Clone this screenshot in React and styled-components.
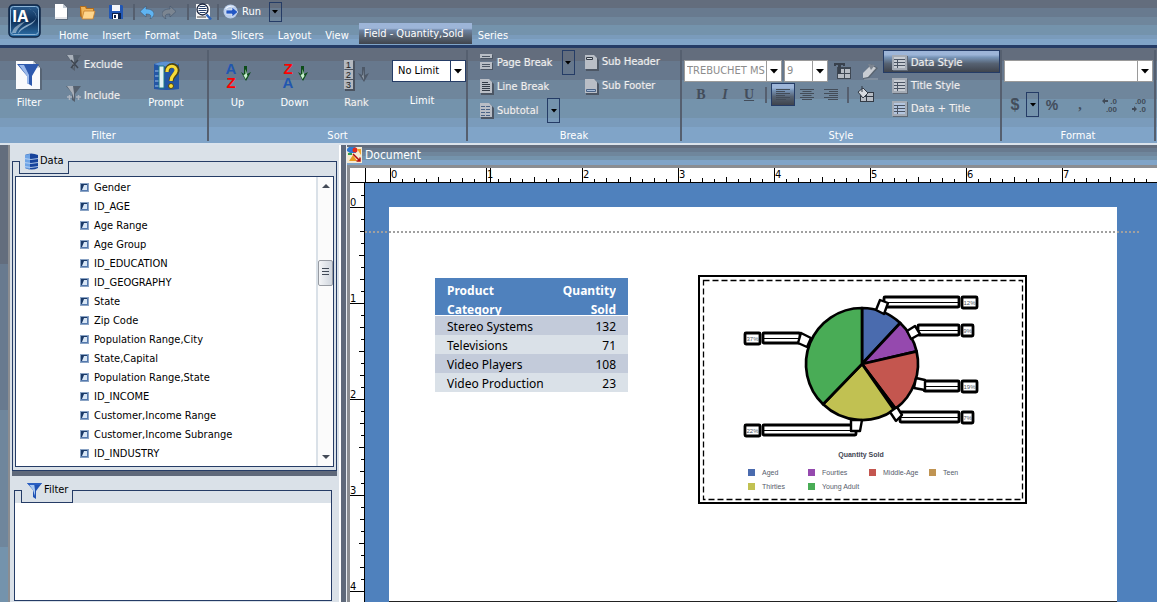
import React, { useEffect, useState } from 'react';
import styled, { createGlobalStyle, css } from 'styled-components';

const NAVY = '#253c66';
const PANEL = '#dae1e8';
const BLUE = '#4f81bd';

const fields = [
  'Gender',
  'ID_AGE',
  'Age Range',
  'Age Group',
  'ID_EDUCATION',
  'ID_GEOGRAPHY',
  'State',
  'Zip Code',
  'Population Range,City',
  'State,Capital',
  'Population Range,State',
  'ID_INCOME',
  'Customer,Income Range',
  'Customer,Income Subrange',
  'ID_INDUSTRY',
];

const rows = [
  ['Stereo Systems', 132],
  ['Televisions', 71],
  ['Video Players', 108],
  ['Video Production', 23],
];

const menu = ['Home', 'Insert', 'Format', 'Data', 'Slicers', 'Layout', 'View'];

/* ---------- icons ---------- */

const Caret = () => (
  <svg width="8" height="5" viewBox="0 0 8 5"><path d="M0 0h8L4 4.5z" fill="#000" /></svg>
);

const SmallCaret = () => (
  <svg width="6" height="4" viewBox="0 0 6 4"><path d="M0 0h6L3 3.5z" fill="#000" /></svg>
);

const LogoIcon = () => (
  <svg width="33" height="34" viewBox="0 0 33 34">
    <defs>
      <linearGradient id="logo" x1="0" y1="0" x2="0" y2="1">
        <stop offset="0" stopColor="#2c5f92" />
        <stop offset="0.5" stopColor="#0d2f58" />
        <stop offset="1" stopColor="#2f74ad" />
      </linearGradient>
    </defs>
    <rect x="1" y="1" width="31" height="32" rx="4" fill="url(#logo)" stroke="#0c2546" strokeWidth="1.5" />
    <rect x="2.5" y="2.5" width="28" height="28" rx="3" fill="none" stroke="#8db4d6" strokeWidth="1" />
    <path d="M20 4c10 4 11 11 3 15-7 3-12 6-13 11 4-6 10-7 15-11 6-5 3-12-5-15z" fill="#a9c6de" opacity=".8" />
    <path d="M4 29c1-6 7-9 14-12-6 5-9 8-10 12z" fill="#dce9f3" opacity=".5" />
    <text x="4" y="18" fontFamily="'Open Sans', sans-serif" fontWeight="700" fontSize="16" fill="#fff">IA</text>
  </svg>
);

const NewIcon = () => (
  <svg width="16" height="17" viewBox="0 0 16 17">
    <path d="M3 2h8l4 4v11H3z" fill="#4d5868" opacity=".6" />
    <path d="M2 1h8l4 4v11H2z" fill="#fff" />
    <path d="M10 1v4h4z" fill="#c2cad4" />
    <path d="M2 14h12v2H2z" fill="#e4e6ea" />
  </svg>
);

const OpenIcon = () => (
  <svg width="17" height="16" viewBox="0 0 17 16">
    <path d="M1 2h6l1 2h7v10H3L1 12z" fill="#b06d1f" />
    <path d="M2 3h4l1 2h7v3H6l-3 6z" fill="#f2b557" />
    <path d="M5 7h11l-2 8H3z" fill="#ffd58c" stroke="#c57f2d" strokeWidth=".8" />
  </svg>
);

const SaveIcon = () => (
  <svg width="16" height="16" viewBox="0 0 16 16">
    <path d="M1 1h13l1 1v13H2l-1-1z" fill="#2257b4" />
    <path d="M4 1h8v6H4z" fill="#f4f6fa" />
    <path d="M4 9h9v6H4z" fill="#0d2148" />
    <path d="M5 10h5v5H5z" fill="#fff" />
    <path d="M6 11h2v3H6z" fill="#0d2148" />
  </svg>
);

const UndoIcon = ({ fill, flip }) => (
  <svg width="14" height="14" viewBox="0 0 14 14">
    <g transform={flip ? 'matrix(-1 0 0 1 14 0)' : undefined}>
      <path d="M6 1v3c5 0 8 2 8 5 0 2-2 4-4 5 2-4 0-5-4-5v3L0 6.500z" fill={fill} stroke="#3d4e66" strokeWidth=".5" />
    </g>
  </svg>
);

const PreviewIcon = () => (
  <svg width="17" height="17" viewBox="0 0 17 17">
    <path d="M1 1h12l2 3v12H1z" fill="#f6f6f6" />
    <path d="M2 14h9" stroke="#444" />
    <circle cx="7.500" cy="6.500" r="5.500" fill="#fff" stroke="#15203a" strokeWidth="1.3" />
    <path d="M4.500 3.500h6M3.500 5.500h8M3.500 7.500h8M4.500 9.500h6" stroke="#27406b" strokeWidth="1" />
    <path d="M11.500 11.500l4.500 5" stroke="#2d62b8" strokeWidth="2.500" />
  </svg>
);

const RunIcon = () => (
  <svg width="16" height="16" viewBox="0 0 16 16">
    <circle cx="7.500" cy="7.500" r="7" fill="#b9cdea" />
    <path d="M2 5a7 7 0 0 1 10-2 9 9 0 0 0-9 2z" fill="#f2f7ff" />
    <path d="M3 6h6V3l6 5-6 5v-3H3z" fill="#2458c4" stroke="#e7eefb" strokeWidth=".7" />
  </svg>
);

const FilterPageIcon = () => (
  <svg width="28" height="31" viewBox="0 0 28 31">
    <path d="M2 2h18l7 7v21H3z" fill="#4c5664" opacity=".6" />
    <path d="M1 1h17l7 7v21H1z" fill="#f9fafc" />
    <path d="M18 1v7h7z" fill="#ccd3dc" />
    <path d="M2 4h22l-7 12v10l-5-3v-7z" fill="#2d59ae" />
    <path d="M4 5l8 11v7l2 1V15L9 5z" fill="#9bb9ea" />
  </svg>
);

const Funnel = ({ blue, mark }) => (
  <svg width="17" height="17" viewBox="0 0 17 17">
    <path d="M1 1h15l-6 8v8l-3-2V8z" fill={blue ? '#1f52b4' : '#55606e'} />
    <path d="M2 1h6l1 7v6L7 8z" fill={blue ? '#a8c8f2' : '#a9b0ba'} />
    {blue && <path d="M1 1h15l-2 2H3z" fill="#2a5fc2" />}
    {mark === 'x' && <path d="M6 6l7 8M13 6l-7 8" stroke="#3e4651" strokeWidth="1.5" />}
    {mark === '+' && <path d="M2 12h5M4.500 10v5M11 12h5M13.500 10v5" stroke="#adb4be" strokeWidth="1.5" />}
  </svg>
);

const PromptIcon = () => (
  <svg width="27" height="31" viewBox="0 0 27 31">
    <path d="M1 4q12-5 25 0v25q-12 2-25 0z" fill="#2456a5" />
    <path d="M1 4q12-5 25 0-12 5-25 0z" fill="#5d92d4" />
    <path d="M2 11h8M2 16h8M2 21h8M2 26h8" stroke="#9dc2e8" />
    <path d="M6 6h5v22H6z" fill="#e2f2f4" stroke="#1f7b84" />
    <path d="M14 12c0-9 11-8 10-1-1 4-5 4-6 10" fill="none" stroke="#4f4513" strokeWidth="5" />
    <path d="M14 12c0-8 10-7 9-1-1 4-5 4-5 10" fill="none" stroke="#f7dc3a" strokeWidth="3.2" />
    <circle cx="18" cy="26" r="2.500" fill="#f7dc3a" stroke="#4f4513" />
  </svg>
);

const SortIcon = ({ first, second }) => (
  <svg width="28" height="31" viewBox="0 0 28 31">
    <g fontFamily="'Liberation Sans', sans-serif" fontWeight="700" fontSize="15" textAnchor="middle">
      <text x="7" y="14" fill={first === 'A' ? '#2156b0' : '#f00'}>{first}</text>
      <text x="7" y="28" fill={second === 'A' ? '#2156b0' : '#f00'}>{second}</text>
    </g>
    <path d="M20 6h3v8l4-2-5 9-5-9 3 2z" fill="#0d4d1a" />
    <path d="M21.500 9v5l-2 1 2 4 2-3z" fill="#c9efce" />
  </svg>
);

const RankIcon = () => (
  <svg width="28" height="31" viewBox="0 0 28 31">
    {[1, 2, 3].map((n, i) => (
      <g key={n}>
        <rect x="2" y={1 + i * 10} width="10" height="10" fill="#4a5360" />
        <rect x="1" y={i * 10} width="9" height="9" fill="#b4b9c0" />
        <text x="5.500" y={8 + i * 10} fontSize="9" fontFamily="'Liberation Sans', sans-serif" textAnchor="middle" fill="#222">{n}</text>
      </g>
    ))}
    <path d="M19 7h3v8l4-2-5 9-6-9 4 2z" fill="#4d5867" />
    <path d="M20 9v6l-1 1 2 4z" fill="#9ea8b4" />
  </svg>
);

const PageIcon = ({ kind }) => (
  <svg width="15" height="17" viewBox="0 0 15 17">
    {kind === 'break' ? (
      <>
        <path d="M2 1h12v4H2zM2 9h12v7H2z" fill="#4c5664" />
        <path d="M1 0h12v4H1zM1 8h12v7H1z" fill="#b9bec6" />
        <path d="M3 2.500h8M3 10.500h8M3 12.500h8" stroke="#4c5664" />
      </>
    ) : (
      <>
        <path d="M2 2h9l4 4v11H2z" fill="#4c5664" />
        <path d="M1 1h9l3 3v11H1z" fill="#b9bec6" />
      </>
    )}
    {kind === 'line' && <path d="M3 4.500h6M3 6.500h8M3 8.500h8M3 10.500h8M3 12.500h8" stroke="#333b46" />}
    {kind === 'subtotal' && <path d="M2 4.500h4M7 4.500h4M2 7.500h4M7 7.500h4M2 10.500h4M7 10.500h4M2 13.500h4M7 13.500h4" stroke="#4b6487" />}
    {kind === 'header' && <path d="M2.500 3.500h6v2h-6z" fill="#d6dae0" stroke="#333b46" />}
    {kind === 'footer' && <path d="M2.500 11.500h9v2h-9z" fill="#a7bcd8" stroke="#4b6487" />}
  </svg>
);

const GridIcon = ({ tint }) => (
  <svg width="16" height="16" viewBox="0 0 16 16">
    <path d="M1 1h15v15H1z" fill="#5f6875" />
    <path d="M0 0h15v15H0z" fill="#a4abb5" />
    <path d="M2 2h11v11H2z" fill={tint || '#c8cdd4'} />
    <path d="M2 4.500h11M2 7.500h11M2 10.500h11M5.500 4v9" stroke="#4b5564" />
  </svg>
);

const TextGridIcon = () => (
  <svg width="17" height="17" viewBox="0 0 17 17">
    <path d="M3 4h14v12H3z" fill="#3f4854" />
    <path d="M4 6h6v4H4zM11 6h5v4h-5zM4 11h6v4H4zM11 11h5v4h-5z" fill="#b7bcc4" />
    <path d="M0 0h11v3H9V2H7v8h1v1H3v-1h1V2H2v1H0z" fill="#39414d" />
  </svg>
);

const EraserIcon = () => (
  <svg width="18" height="17" viewBox="0 0 18 17">
    <path d="M3 16h14" stroke="#9aa5b2" />
    <path d="M2 11l8-10 7 4-9 10-6 1z" fill="#596470" />
    <path d="M2 10l8-8 5 3-8 9-5 1z" fill="#c9cdd3" />
    <path d="M7 1l3 6 4-5z" fill="#7b8490" />
  </svg>
);

const FillIcon = () => (
  <svg width="17" height="17" viewBox="0 0 17 17">
    <path d="M3 6h14v10H3z" fill="#333b46" />
    <path d="M4 11h5v4H4zM10 7h6v3h-6zM10 11h6v4h-6z" fill="#b7bcc4" />
    <path d="M1 6l5-4 5 5-5 5z" fill="#d8dbe0" stroke="#333b46" />
    <path d="M5 0v6" stroke="#333b46" />
  </svg>
);

const AlignIcon = ({ side }) => {
  const widths = [14, 9, 14, 9, 14, 10];
  return (
    <svg width="14" height="14" viewBox="0 0 14 14">
      {widths.map((w, i) => {
        const x = side === 'left' ? 0 : side === 'right' ? 14 - w : (14 - w) / 2;
        return <rect key={i} x={x} y={1 + i * 2} width={w} height="1" fill="#434c58" />;
      })}
    </svg>
  );
};

const DecimalIcon = ({ top, bottom, left }) => (
  <svg width="16" height="16" viewBox="0 0 16 16" fill="#414b58">
    <g fontFamily="'Liberation Sans', sans-serif" fontWeight="700" fontSize="8" textAnchor="end">
      <text x="15" y="7">{top}</text>
      <text x="15" y="15">{bottom}</text>
    </g>
    {left
      ? <path d="M0 4l3-3v2h3v2H3v2z" />
      : <path d="M6 12l-3-3v2H1v2h2v2z" />}
  </svg>
);

const DatabaseIcon = () => (
  <svg width="15" height="17" viewBox="0 0 15 17">
    <path d="M1 2q6-3 13 0v13q-6 3-13 0z" fill="#17439b" />
    <path d="M1 2q3-1 5-1v15q-3 0-5-1z" fill="#6ea4e6" />
    <path d="M0 5.500q7 2 14 0M0 9.500q7 2 14 0M0 13.500q7 2 14 0" stroke="#c9dcf5" fill="none" strokeWidth=".8" />
  </svg>
);

const FieldIcon = () => (
  <svg width="9" height="9" viewBox="0 0 9 9">
    <path d="M0 0h9v9H0z" fill="#8aa3c4" />
    <path d="M1 1h7v7H1z" fill="#1b3a68" />
    <path d="M4 2h3v5H2z" fill="#d8e6f5" />
    <path d="M7 1h1v7H1V7h6z" fill="#5479ae" />
  </svg>
);

const DocIcon = () => (
  <svg width="15" height="16" viewBox="0 0 15 16">
    <path d="M0 0h15v16H0z" fill="#f5ead2" />
    <path d="M0 4a5 4 0 0 1 9-3v5H3z" fill="#2e78d2" />
    <circle cx="8" cy="3" r="2.500" fill="#e22a1d" />
    <path d="M1 6h4v2H1z" fill="#2e9c4a" />
    <path d="M10 2h4v6z" fill="#f0a22c" />
    <path d="M2 14l4-6 4 6z" fill="#e89a20" />
    <path d="M6 7l7 7M13 10.500V14h-3.500" stroke="#b10d0d" strokeWidth="1.500" fill="none" />
  </svg>
);

/* ---------- rulers ---------- */

const STEP = 12; // an eighth of an inch

function useWindowSize() {
  const read = () => ({ width: window.innerWidth, height: window.innerHeight });
  const [size, setSize] = useState(read);
  useEffect(() => {
    const onResize = () => setSize(read());
    window.addEventListener('resize', onResize);
    return () => window.removeEventListener('resize', onResize);
  }, []);
  return size;
}

function Ticks({ vertical, origin, depth, to }) {
  const ticks = [];
  for (let i = -1; i <= to; i += 1) {
    const pos = origin + i * STEP;
    const mod = ((i % 8) + 8) % 8;
    let len = 3;
    if (mod === 0) len = depth;
    else if (mod === 4) len = 5;
    else if (mod % 2 === 0) len = 4;
    ticks.push(
      <g key={i}>
        {vertical
          ? <rect x={depth - len} y={pos} width={len} height="1" />
          : <rect x={pos} y={depth - len} width="1" height={len} />}
        {mod === 0 && (
          vertical
            ? <text x="0" y={pos - 1}>{i / 8}</text>
            : <text x={pos + 1} y="10">{i / 8}</text>
        )}
      </g>,
    );
  }
  return <g fill="#000" fontFamily="'DejaVu Sans Condensed', sans-serif" fontSize="11">{ticks}</g>;
}

/* ---------- pie chart ---------- */

const CX = 164;
const CY = 89;
const R = 56;

const slices = [
  { from: 0, to: 43, fill: '#4a6bae' },
  { from: 43, to: 77, fill: '#9549ae' },
  { from: 77, to: 143, fill: '#c4564f' },
  { from: 143, to: 145, fill: '#c09452' },
  { from: 145, to: 224, fill: '#c1c152' },
  { from: 224, to: 360, fill: '#49ac56' },
];

const callouts = [
  { x: 186, y: 22, w: 75, box: 264, bw: 15, text: '12%', stub: 'M178 35l4-10 8 3-4 11z' },
  { x: 220, y: 50, w: 41, box: 264, bw: 11, text: '9%', stub: 'M209 56l8-5 5 8-9 5z' },
  { x: 226, y: 106, w: 35, box: 264, bw: 15, text: '19%', stub: 'M218 103l9 2v10l-11-2z' },
  { x: 202, y: 137, w: 59, box: 264, bw: 11, text: '7%', stub: 'M192 137l7-5 5 8-6 6z' },
  { x: 65, y: 150, w: 93, box: 47, bw: 15, text: '22%', stub: 'M153 145h11l-2 11h-9z' },
  { x: 65, y: 58, w: 37, box: 47, bw: 15, text: '37%', stub: 'M103 58l10 5-4 9-9-4z' },
];

const legend = [
  { x: 50, y: 194, fill: '#4a6bae', name: 'Aged' },
  { x: 110, y: 194, fill: '#9549ae', name: 'Fourties' },
  { x: 171, y: 194, fill: '#c4564f', name: 'Middle-Age' },
  { x: 231, y: 194, fill: '#c09452', name: 'Teen' },
  { x: 50, y: 208, fill: '#c1c152', name: 'Thirties' },
  { x: 110, y: 208, fill: '#49ac56', name: 'Young Adult' },
];

const point = (deg) => {
  const a = (deg * Math.PI) / 180;
  return `${(CX + R * Math.sin(a)).toFixed(1)} ${(CY - R * Math.cos(a)).toFixed(1)}`;
};

function PieChart() {
  return (
    <svg width="329" height="229" viewBox="0 0 329 229" role="img" aria-label="Quantity Sold">
      <rect x="1" y="1" width="327" height="227" fill="#fff" stroke="#000" strokeWidth="2" />
      <rect x="5.500" y="5.500" width="319" height="219" fill="none" stroke="#000" strokeWidth="1.300" strokeDasharray="6 3" />
      {slices.map((s) => (
        <path
          key={s.from}
          d={`M${CX} ${CY}L${point(s.from)}A${R} ${R} 0 0 1 ${point(s.to)}z`}
          fill={s.fill}
          stroke="#000"
          strokeWidth="2.7"
          strokeLinejoin="round"
        />
      ))}
      {callouts.map((c) => (
        <g key={c.text} fill="#fff" stroke="#000" strokeWidth="2.8" strokeLinejoin="round">
          <rect x={c.x} y={c.y} width={c.w} height="10" rx="1" />
          <path d={`M${c.x} ${c.y + 5.5}h${c.w}`} strokeWidth="1" />
          <path d={c.stub} strokeWidth="2.4" />
          <rect x={c.box} y={c.y} width={c.bw} height="11" rx="1" />
          <text x={c.box + c.bw / 2} y={c.y + 8} fontSize="6" fill="#4b5563" stroke="none" textAnchor="middle" fontFamily="'Liberation Sans', sans-serif">
            {c.text}
          </text>
        </g>
      ))}
      <g fontFamily="'Liberation Sans', sans-serif" fontSize="7" fill="#565c6c">
        <text x="163" y="182" textAnchor="middle" fontWeight="700" fill="#3f4654">Quantity Sold</text>
        {legend.map((l) => (
          <g key={l.name}>
            <rect x={l.x} y={l.y} width="7" height="7" fill={l.fill} />
            <text x={l.x + 14} y={l.y + 6}>{l.name}</text>
          </g>
        ))}
      </g>
    </svg>
  );
}

function Combo({ label, value, width, light }) {
  return (
    <ComboBox $width={width} $light={light}>
      <select aria-label={label} defaultValue={value}>
        <option>{value}</option>
      </select>
      <ComboArrow $light={light}><Caret /></ComboArrow>
    </ComboBox>
  );
}

export default function App() {
  const { width, height } = useWindowSize();

  return (
    <Shell>
      <GlobalStyle />
      <Header>
        <LogoButton aria-label="Application menu"><LogoIcon /></LogoButton>
        <HeaderRows>
          <QuickBar>
            <IconButton $w={20} aria-label="New"><NewIcon /></IconButton>
            <IconButton $w={32} aria-label="Open"><OpenIcon /></IconButton>
            <IconButton $w={26} aria-label="Save"><SaveIcon /></IconButton>
            <ThinLine />
            <IconButton $w={16} aria-label="Undo"><UndoIcon fill="#5fb4f2" /></IconButton>
            <IconButton $w={28} aria-label="Redo"><UndoIcon fill="#7b8591" flip /></IconButton>
            <ThinLine />
            <IconButton $w={20} aria-label="Preview"><PreviewIcon /></IconButton>
            <ThinLine />
            <RunButton><RunIcon />Run</RunButton>
            <DropButton $h={20} aria-label="Run options"><SmallCaret /></DropButton>
          </QuickBar>
          <MenuBar>
            {menu.map((m) => <MenuItem key={m} href="#">{m}</MenuItem>)}
            <MenuItem href="#" $active>Field - Quantity,Sold</MenuItem>
            <MenuItem href="#">Series</MenuItem>
          </MenuBar>
        </HeaderRows>
      </Header>

      <Ribbon>
        <Group $w={207}>
          <GroupBody $left={15}>
            <BigButton $w={28}><FilterPageIcon />Filter</BigButton>
            <FilterStack>
              <FadedButton><Funnel mark="x" /><span>Exclude</span></FadedButton>
              <FadedButton><Funnel mark="+" /><span>Include</span></FadedButton>
            </FilterStack>
            <BigButton $w={36}><PromptIcon />Prompt</BigButton>
          </GroupBody>
          <GroupLabel>Filter</GroupLabel>
        </Group>
        <Divider />
        <Group $w={257}>
          <GroupBody>
            <BigButton $w={57}><SortIcon first="A" second="Z" />Up</BigButton>
            <BigButton $w={57}><SortIcon first="Z" second="A" />Down</BigButton>
            <BigButton $w={67} $faded><RankIcon />Rank</BigButton>
            <LimitBox>
              <Combo label="Limit" value="No Limit" width={74} />
              <span>Limit</span>
            </LimitBox>
          </GroupBody>
          <GroupLabel>Sort</GroupLabel>
        </Group>
        <Divider />
        <Group $w={212}>
          <GroupBody $left={11}>
            <BreakColumn>
              <BreakRow $h={25}>
                <SmallButton><PageIcon kind="break" />Page Break</SmallButton>
                <DropButton $h={25} aria-label="Page break options"><SmallCaret /></DropButton>
              </BreakRow>
              <BreakRow $h={23}>
                <SmallButton><PageIcon kind="line" />Line Break</SmallButton>
              </BreakRow>
              <BreakRow $h={25}>
                <SmallButton><PageIcon kind="subtotal" />Subtotal</SmallButton>
                <DropButton $h={25} aria-label="Subtotal options"><SmallCaret /></DropButton>
              </BreakRow>
            </BreakColumn>
            <BreakColumn>
              <BreakRow $h={24}>
                <SmallButton><PageIcon kind="header" />Sub Header</SmallButton>
              </BreakRow>
              <BreakRow $h={24}>
                <SmallButton><PageIcon kind="footer" />Sub Footer</SmallButton>
              </BreakRow>
            </BreakColumn>
          </GroupBody>
          <GroupLabel>Break</GroupLabel>
        </Group>
        <Divider />
        <Group $w={318}>
          <GroupBody $left={2}>
            <FontBlock>
              <FontRow>
                <Combo label="Font" value="TREBUCHET MS" width={99} light />
                <Combo label="Size" value="9" width={44} light />
                <IconButton $w={26} aria-label="Text grid"><TextGridIcon /></IconButton>
                <IconButton $w={26} aria-label="Clear style"><EraserIcon /></IconButton>
              </FontRow>
              <ToolRow>
                <LetterButton $w={24}>B</LetterButton>
                <LetterButton $w={24} $italic>I</LetterButton>
                <LetterButton $w={24} $underline>U</LetterButton>
                <ThinLine />
                <IconButton $w={24} $pressed aria-label="Align left"><AlignIcon side="left" /></IconButton>
                <IconButton $w={24} aria-label="Align center"><AlignIcon side="center" /></IconButton>
                <IconButton $w={24} aria-label="Align right"><AlignIcon side="right" /></IconButton>
                <ThinLine />
                <IconButton $w={24} aria-label="Fill color"><FillIcon /></IconButton>
              </ToolRow>
            </FontBlock>
            <StyleList>
              <StyleButton $pressed><GridIcon />Data Style</StyleButton>
              <StyleButton><GridIcon />Title Style</StyleButton>
              <StyleButton><GridIcon tint="#b4c6e0" />Data + Title</StyleButton>
            </StyleList>
          </GroupBody>
          <GroupLabel>Style</GroupLabel>
        </Group>
        <Divider />
        <Group>
          <FormatBody>
            <Combo label="Number format" value="" light />
            <FormatRow>
              <LetterButton $w={22} $big>$</LetterButton>
              <DropButton $h={25} aria-label="Currency options"><SmallCaret /></DropButton>
              <LetterButton $w={26} $plain>%</LetterButton>
              <LetterButton $w={30}>,</LetterButton>
              <IconButton $w={29} aria-label="Increase decimals"><DecimalIcon top=".0" bottom=".00" left /></IconButton>
              <IconButton $w={29} aria-label="Decrease decimals"><DecimalIcon top=".00" bottom=".0" /></IconButton>
            </FormatRow>
          </FormatBody>
          <GroupLabel>Format</GroupLabel>
        </Group>
        <Divider />
      </Ribbon>

      <Workspace>
        <LeftStrip />
        <Sidebar>
          <DataPanel>
            <PanelTab $left={6}><span><DatabaseIcon />Data</span></PanelTab>
            <TreeBox>
              <Tree>
                {fields.map((f) => (
                  <li key={f}><FieldIcon />{f}</li>
                ))}
              </Tree>
              <ScrollBar>
                <svg width="8" height="4" viewBox="0 0 8 4"><path d="M0 4l4-4 4 4z" fill="#444b57" /></svg>
                <Thumb>
                  <svg width="7" height="9" viewBox="0 0 7 9">
                    <path d="M0 .500h7M0 3.500h7M0 6.500h7" stroke="#414a57" />
                  </svg>
                </Thumb>
                <svg width="8" height="4" viewBox="0 0 8 4"><path d="M0 0l4 4 4-4z" fill="#444b57" /></svg>
              </ScrollBar>
            </TreeBox>
          </DataPanel>
          <Splitter />
          <FilterPanel>
            <PanelTab $left={6}><span><Funnel blue />Filter</span></PanelTab>
            <FilterDrop />
          </FilterPanel>
        </Sidebar>
        <SideGap />
        <DocumentPane>
          <TitleBar><DocIcon />Document</TitleBar>
          <Sheet>
            <RulerTop>
              <svg width="100%" height="14">
                <Ticks origin={40} depth={14} to={Math.floor((width - 400) / STEP)} />
                <rect x="15" y="0" width="1" height="14" />
                <rect x="140" y="0" width="1" height="14" />
              </svg>
            </RulerTop>
            <SheetBody>
              <RulerLeft>
                <svg width="14" height="100%">
                  <Ticks vertical origin={24} depth={14} to={Math.floor((height - 210) / STEP)} />
                </svg>
              </RulerLeft>
              <Canvas>
                <MarginGuide />
                <Paper>
                  <DataTable>
                    <thead>
                      <tr>
                        <th scope="col"><div>Product Category</div></th>
                        <th scope="col"><div>Quantity Sold</div></th>
                      </tr>
                    </thead>
                    <tbody>
                      {rows.map(([name, qty]) => (
                        <tr key={name}>
                          <td>{name}</td>
                          <td>{qty}</td>
                        </tr>
                      ))}
                    </tbody>
                  </DataTable>
                  <PieChart />
                </Paper>
              </Canvas>
            </SheetBody>
          </Sheet>
        </DocumentPane>
      </Workspace>
    </Shell>
  );
}

const GlobalStyle = createGlobalStyle`
  * {
    box-sizing: border-box;
  }
  body {
    margin: 0;
    background: #fff;
    overflow: hidden;
  }
  body, button, select {
    font-family: 'DejaVu Sans Condensed', 'Noto Sans', sans-serif;
    font-size: 11px;
    line-height: 14px;
  }
  button {
    padding: 0;
    border: none;
    background: none;
    color: #fff;
    white-space: nowrap;
  }
  svg {
    display: block;
    flex: none;
  }
`;

const pressed = css`
  border: 1px solid ${NAVY};
  background: linear-gradient(#9db5d8 0 18%, #7895b8 30%, #566272 60%, #3f444d);
`;

const faded = css`
  color: #f3f3f3;
  text-shadow: -1px 0 0 #969ca6;
`;

const Shell = styled.div`
  display: flex;
  flex-direction: column;
  height: 100vh;
  padding: 0 2px 2px 0;
`;

const Header = styled.header`
  display: flex;
  height: 48px;
  border-bottom: 3px solid ${NAVY};
  background: linear-gradient(
    #636d7d 0 8px, #687a8f 8px 17px, #6f869c 17px 25px,
    #7493ac 25px 35px, #7a9bbb 35px 39px, #80a4c8 39px
  );
`;

const LogoButton = styled.button`
  width: 51px;
  padding: 0 0 4px 8px;
`;

const HeaderRows = styled.div`
  flex: 1;
`;

const QuickBar = styled.div`
  display: flex;
  align-items: center;
  height: 23px;
`;

const IconButton = styled.button`
  display: flex;
  align-items: center;
  justify-content: center;
  width: ${(p) => p.$w}px;
  ${(p) => p.$pressed && css`
    height: 23px;
    ${pressed}
  `}
`;

const ThinLine = styled.i`
  flex: none;
  width: 2px;
  height: 16px;
  margin: 0 4px;
  background: #555f6f;
`;

const RunButton = styled.button`
  display: flex;
  align-items: center;
  gap: 3px;
  margin-right: 8px;
`;

const DropButton = styled.button`
  display: flex;
  align-items: center;
  justify-content: center;
  width: 13px;
  height: ${(p) => p.$h}px;
  border: 1px solid ${NAVY};
`;

const MenuBar = styled.nav`
  display: flex;
  gap: 1px;
  height: 22px;
`;

const MenuItem = styled.a`
  padding: 0 8px;
  color: #fff;
  line-height: 26px;
  text-decoration: none;
  white-space: nowrap;
  ${(p) => p.$active && css`
    height: 21px;
    margin-left: 1px;
    line-height: 21px;
    background: linear-gradient(#9db5d8 0 25%, #6d83a2 35%, #5d6979 60%, #3f444d);

    & + & {
      padding-left: 5px;
    }
  `}
`;

const Ribbon = styled.section`
  display: flex;
  height: 97px;
  padding-right: 1px;
  border-bottom: 2px solid #dbe3ec;
  background: linear-gradient(
    #636d7d 0 13px, #67788d 13px 32px, #6f869c 32px 51px,
    #7493ac 51px 70px, #7a9bbb 70px 79px, #80a4c8 79px
  );
`;

const Divider = styled.i`
  flex: none;
  width: 2px;
  margin: 2px 0;
  background: #555f6f;
`;

const Group = styled.div`
  display: flex;
  flex-direction: column;
  flex: ${(p) => (p.$w ? `0 0 ${p.$w}px` : '1')};
  min-width: 0;
  color: #fff;
`;

const GroupBody = styled.div`
  display: flex;
  flex: 1;
  align-items: flex-start;
  padding-left: ${(p) => p.$left || 0}px;
`;

const GroupLabel = styled.div`
  height: 16px;
  line-height: 18px;
  text-align: center;
`;

const BigButton = styled.button`
  display: flex;
  flex-direction: column;
  align-items: center;
  gap: 5px;
  width: ${(p) => p.$w}px;
  padding-top: 12px;
  ${(p) => p.$faded && faded}
`;

const FilterStack = styled.div`
  display: flex;
  flex-direction: column;
  gap: 13px;
  width: 57px;
  margin: 6px 26px 0 22px;
`;

const FadedButton = styled.button`
  display: flex;
  gap: 2px;
  height: 18px;
  ${faded}

  span {
    align-self: flex-end;
  }
`;

const LimitBox = styled.label`
  display: flex;
  flex-direction: column;
  align-items: center;
  gap: 12px;
  padding: 12px 0 0 2px;

  > span {
    padding-right: 14px;
  }
`;

const ComboBox = styled.div`
  display: flex;
  width: ${(p) => (p.$width ? `${p.$width}px` : '100%')};
  height: 22px;
  border: ${(p) => (p.$light ? '1px solid #9a9a9a' : `1px solid ${NAVY}`)};
  background: #fff;

  select {
    flex: 1;
    min-width: 0;
    padding: 0 0 0 ${(p) => (p.$light ? 2 : 5)}px;
    border: none;
    background: none;
    color: ${(p) => (p.$light ? '#8c8c8c' : '#000')};
    appearance: none;
  }
`;

const ComboArrow = styled.span`
  display: flex;
  align-items: center;
  justify-content: center;
  width: 15px;
  border-left: 1px solid ${(p) => (p.$light ? '#9a9a9a' : NAVY)};
`;

const BreakColumn = styled.div`
  flex: none;
  width: 105px;
  padding-top: 2px;

  & + & {
    width: 92px;
  }
`;

const BreakRow = styled.div`
  display: flex;
  align-items: center;
  gap: 9px;
  height: ${(p) => p.$h}px;
`;

const SmallButton = styled.button`
  display: flex;
  align-items: center;
  gap: 3px;
  line-height: 16px;
  ${faded}
`;

const FontBlock = styled.div`
  width: 199px;
  padding-top: 12px;
`;

const FontRow = styled.div`
  display: flex;
  gap: 2px;
  height: 23px;
`;

const ToolRow = styled.div`
  display: flex;
  align-items: center;
  height: 23px;
  padding-left: 5px;
`;

const LetterButton = styled.button`
  width: ${(p) => p.$w}px;
  color: #434d5b;
  font-family: ${(p) => (p.$big || p.$plain ? "'Liberation Sans', sans-serif" : "'Liberation Serif', serif")};
  font-size: ${(p) => (p.$big ? 16 : 14)}px;
  font-weight: 700;
  font-style: ${(p) => (p.$italic ? 'italic' : 'normal')};
  text-decoration: ${(p) => (p.$underline ? 'underline' : 'none')};
`;

const StyleList = styled.div`
  flex: 1;
  padding-top: 2px;
`;

const StyleButton = styled.button`
  display: flex;
  align-items: center;
  gap: 3px;
  width: 100%;
  height: 23px;
  padding: 2px 0 0 8px;
  border: 1px solid transparent;
  ${faded}
  ${(p) => p.$pressed && pressed}
`;

const FormatBody = styled.div`
  flex: 1;
  padding: 12px 1px 0 2px;
`;

const FormatRow = styled.div`
  display: flex;
  align-items: center;
  height: 25px;
  margin-top: 10px;
`;

const Workspace = styled.main`
  display: flex;
  flex: 1;
  min-height: 0;
  background: ${PANEL};
`;

const LeftStrip = styled.div`
  width: 10px;
  border-right: 2px solid #8b8d91;
  background: linear-gradient(#636d7d 0 26%, #687a8f 26% 58%, #6f869c 58% 88%, #7493ac 88%);
`;

const Sidebar = styled.aside`
  display: flex;
  flex-direction: column;
  width: 331px;
  padding-top: 16px;
  border-right: 2px solid #fff;
`;

const DataPanel = styled.section`
  display: flex;
  flex-direction: column;
  flex: 1;
  min-height: 0;
  margin: 0 2px;
  border: 1px solid ${NAVY};
`;

/* the label is taller than the tab and grows upwards over the panel border */
const PanelTab = styled.h2`
  display: flex;
  align-items: flex-end;
  align-self: flex-start;
  height: 13px;
  margin: -1px 0 0 ${(p) => p.$left}px;
  padding: 0 4px;
  border: 1px solid ${NAVY};
  border-top: none;
  background: ${PANEL};
  font-size: 11px;
  font-weight: 400;

  span {
    display: flex;
    align-items: center;
    gap: 1px;
    height: 24px;
    background: ${PANEL};
  }
`;

const TreeBox = styled.div`
  display: flex;
  flex: 1;
  min-height: 0;
  margin: 2px 2px 3px;
  border: 1px solid ${NAVY};
  background: #fff;
`;

const Tree = styled.ul`
  flex: 1;
  margin: 0;
  padding: 1px 0 0 64px;
  overflow: hidden;
  list-style: none;

  li {
    display: flex;
    align-items: center;
    gap: 5px;
    height: 19px;
  }
`;

const ScrollBar = styled.div`
  display: flex;
  flex-direction: column;
  align-items: center;
  justify-content: space-between;
  width: 17px;
  padding: 7px 0;
  border-left: 2px solid ${PANEL};
  background: #fbfbfb;
`;

const Thumb = styled.div`
  display: flex;
  align-items: center;
  justify-content: center;
  width: 15px;
  height: 26px;
  margin-bottom: 98px;
  border: 1px solid #979ba2;
  border-radius: 2px;
  background: linear-gradient(90deg, #f4f5f7, #d0d6de);
  flex: none;
`;

const Splitter = styled.div`
  height: 5px;
  margin: 0 2px;
  background: #5f697a;
`;

const FilterPanel = styled.section`
  display: flex;
  flex-direction: column;
  height: 111px;
  margin: 14px 7px 1px 4px;
  border: 1px solid ${NAVY};
`;

const FilterDrop = styled.div`
  flex: 1;
  background: #fff;
`;

const SideGap = styled.div`
  width: 6px;
  border-right: 1px solid #e7ecf2;
  background: #5f697a;
`;

const DocumentPane = styled.section`
  display: flex;
  flex-direction: column;
  flex: 1;
  min-width: 0;
`;

const TitleBar = styled.h1`
  display: flex;
  align-items: center;
  gap: 3px;
  height: 20px;
  margin: 0;
  background: linear-gradient(
    #636d7d 0 3px, #687a8f 3px 7px, #6f869c 7px 11px, #7493ac 11px 15px, #80a4c8 15px
  );
  color: #fff;
  font-size: 12px;
  font-weight: 400;
`;

const Sheet = styled.div`
  display: flex;
  flex-direction: column;
  flex: 1;
  min-height: 0;
  border: solid #8b8d91;
  border-width: 3px 0 0 3px;
  background: #fff;
`;

const RulerTop = styled.div`
  height: 15px;
  border-bottom: 1px solid #000;
`;

const SheetBody = styled.div`
  display: flex;
  flex: 1;
  min-height: 0;
`;

const RulerLeft = styled.div`
  width: 15px;
  border-right: 1px solid #000;
  overflow: hidden;
`;

const Canvas = styled.div`
  display: flex;
  position: relative;
  flex: 1;
  padding: 24px 40px 0 24px;
  background: ${BLUE};
`;

const MarginGuide = styled.div`
  position: absolute;
  top: 48px;
  right: 16px;
  left: 0;
  height: 2px;
  background: repeating-linear-gradient(90deg, #a0a0a0 0 2px, transparent 2px 4px);
`;

const Paper = styled.div`
  display: flex;
  flex: 1;
  align-items: flex-start;
  gap: 70px;
  padding: 68px 0 0 46px;
  border-bottom: 1px solid #222;
  background: #fff;
`;

const DataTable = styled.table`
  width: 193px;
  margin-top: 3px;
  border-collapse: collapse;
  font-family: 'Noto Sans', sans-serif;
  font-size: 12px;
  line-height: 16px;

  th {
    padding: 0 0 0 12px;
    border-bottom: 1px solid #fff;
    background: ${BLUE};
    color: #fff;
    line-height: 19px;
    text-align: left;
  }
  th div {
    width: 58px;
    height: 37px;
    padding-top: 3px;
    overflow: hidden;
  }
  th:last-child {
    padding: 0 12px 0 0;
  }
  th:last-child div {
    margin-left: auto;
  }
  td {
    height: 19px;
    padding: 3px 0 0 12px;
    background: #dae1e8;
    white-space: nowrap;
  }
  td:last-child {
    padding: 3px 12px 0 0;
  }
  tr:nth-child(odd) td {
    background: #c3cbda;
  }
  td:last-child, th:last-child {
    text-align: right;
  }
`;
